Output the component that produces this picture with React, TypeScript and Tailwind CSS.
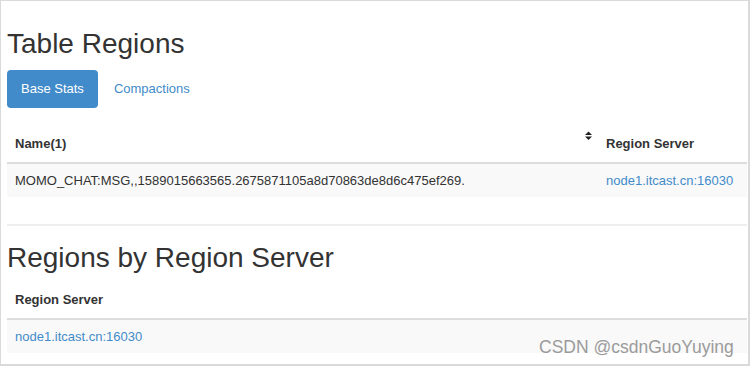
import React from "react";

// Sort arrows drawn next to a sortable header
const SortIcon = () => (
  <svg width="9" height="10" viewBox="0 0 9 10" className="absolute right-[5px] top-[5px]">
    <path d="M4.5 0.5 L8 4 L1 4 Z" fill="#222" />
    <path d="M1 5.5 L8 5.5 L4.5 9 Z" fill="#222" />
  </svg>
);

const pills = [
  { label: "Base Stats", active: true },
  { label: "Compactions", active: false },
];

export default function App() {
  return (
    <div className="relative h-[366px] w-[750px] overflow-hidden border-t border-l border-r-2 border-b-2 border-[#dadada] bg-white font-['Liberation_Sans',Arial,sans-serif] text-[#333]">
      <div className="pl-[6px] pr-px">
        <h2 className="mt-[26px] text-[28px] leading-[33px] font-normal">Table Regions</h2>

        <ul className="mt-[10px] flex gap-[2px] text-[13px]">
          {pills.map((p) => (
            <li
              key={p.label}
              className={
                p.active
                  ? "flex h-[38px] items-center rounded-[4px] bg-[#428bca] px-[14px] text-white"
                  : "flex h-[38px] items-center px-[14px] text-[#428bca]"
              }
            >
              {p.label}
            </li>
          ))}
        </ul>

        <table className="mt-[18px] w-full table-fixed border-collapse text-[13px]">
          <colgroup>
            <col className="w-[591px]" />
            <col />
          </colgroup>
          <thead>
            <tr className="h-[37px] border-b-2 border-[#ddd]">
              <th className="relative px-[8px] text-left font-bold">
                Name(1)
                <SortIcon />
              </th>
              <th className="px-[8px] text-left font-bold">Region Server</th>
            </tr>
          </thead>
          <tbody>
            <tr className="h-[34px] bg-[#f9f9f9]">
              <td className="px-[8px]">MOMO_CHAT:MSG,,1589015663565.2675871105a8d70863de8d6c475ef269.</td>
              <td className="px-[8px] text-[#428bca]">node1.itcast.cn:16030</td>
            </tr>
          </tbody>
        </table>

        <div className="mt-[27px] border-t-2 border-[#eee]" />

        <h2 className="mt-[15px] text-[28px] leading-[33px] font-normal">Regions by Region Server</h2>

        <table className="mt-[8px] w-full border-collapse text-[13px]">
          <thead>
            <tr className="h-[37px] border-b-2 border-[#ddd]">
              <th className="px-[8px] text-left font-bold">Region Server</th>
            </tr>
          </thead>
          <tbody>
            <tr className="h-[34px] bg-[#f9f9f9]">
              <td className="px-[8px] text-[#428bca]">node1.itcast.cn:16030</td>
            </tr>
          </tbody>
        </table>
      </div>

      <div className="absolute left-[538px] top-[336px] text-[17.5px] leading-[21px] text-[#9b9b9b]">
        CSDN @csdnGuoYuying
      </div>
    </div>
  );
}
